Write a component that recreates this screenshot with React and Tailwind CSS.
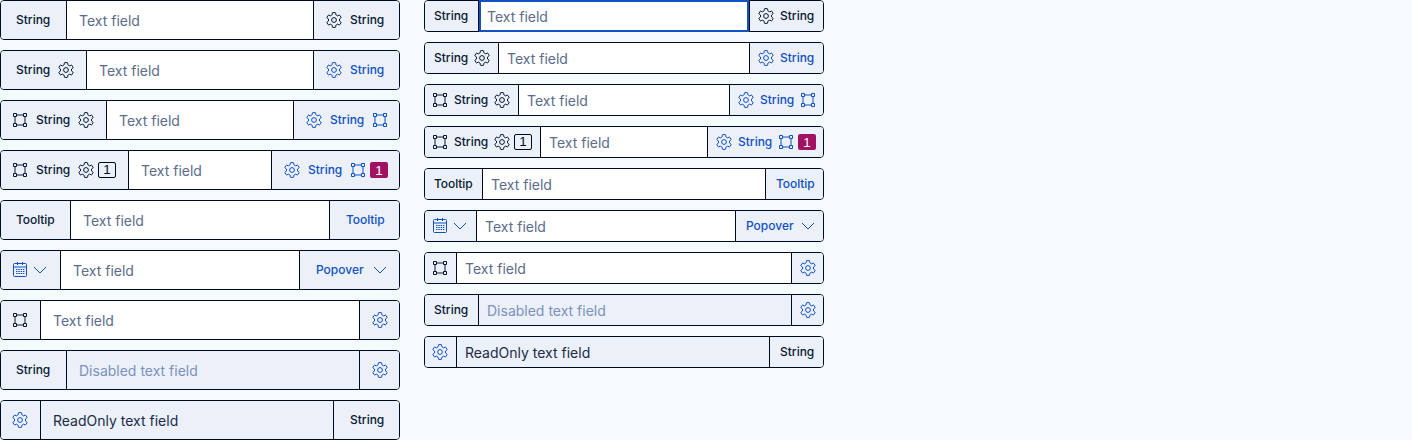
import { createContext, useContext } from "react";
import clsx from "clsx";

const SmallContext = createContext(false);

function Gear() {
  return (
    <svg className="size-4 shrink-0" viewBox="0 0 16 16" fill="none" stroke="currentColor" strokeWidth="1" strokeLinejoin="round">
      <path d="M6.900 .6h2.200q.5 0 .55.500L9.800 2.700L11.700 3.900L13.200 3.200q.5-.2.75.2L15 5.300q.25.450-.15.750L13.500 7V9L14.850 9.950q.4.300.15.750L13.950 12.600q-.250.400-.750.200L11.700 12.100L9.800 13.300L9.650 14.900q-.05.500-.55.500H6.900q-.5 0-.55-.5L6.200 13.300L4.300 12.100L2.800 12.800q-.5.200-.75-.2L1 10.700q-.25-.450.15-.750L2.500 9V7L1.150 6.050q-.4-.3-.15-.75L2.050 3.400q.25-.4.750-.2L4.300 3.900L6.200 2.700L6.350 1.100q.05-.5.550-.5z" />
      <circle cx="8" cy="8" r="2.400" />
    </svg>
  );
}

function Frame() {
  return (
    <svg className="size-4 shrink-0" viewBox="0 0 16 16" fill="none" stroke="currentColor">
      <path d="M1.500 1.500h3v3h-3zM11.500 1.500h3v3h-3zM1.500 11.500h3v3h-3zM11.500 11.500h3v3h-3z" />
      <path d="M5 3h6M5 13h6M3 5v6M13 5v6" />
    </svg>
  );
}

function Calendar() {
  return (
    <svg className="size-4 shrink-0" viewBox="0 0 16 16" fill="none" stroke="currentColor">
      <rect x="1.500" y="1.500" width="13" height="13" rx="1" />
      <path d="M2 5h12M5.500 0v3M10.500 0v3" />
      <path strokeDasharray="1.500 .8" d="M4 7.500h8.400M4 9.500h8.400M4 11.500h8.400" />
    </svg>
  );
}

function Chevron() {
  return (
    <svg className="size-4 shrink-0" viewBox="0 0 16 16" fill="none" stroke="currentColor">
      <path d="M2 5l6 6 6-6" />
    </svg>
  );
}

const labelWidths = {
  String: "w-[34px]",
  Tooltip: "w-[38px] tracking-[-0.08px]",
  Popover: "w-12",
};

function Label({ children }) {
  const small = useContext(SmallContext);
  return (
    <span
      className={clsx(
        "box-content shrink-0 text-xs leading-4 font-medium whitespace-nowrap",
        labelWidths[children],
        small ? "px-0.5" : "px-1",
      )}
    >
      {children}
    </span>
  );
}

function Counter({ filled }) {
  return (
    <span
      className={clsx(
        "flex h-4 w-[18px] shrink-0 items-center justify-center rounded-[2px] font-['Liberation_Sans',sans-serif] text-[13.333px] leading-none",
        filled ? "bg-[#a11262] pt-px text-white" : "border border-[#000a1f] text-[#000a1f]",
      )}
    >
      1
    </span>
  );
}

function Addon({ side, blue, children }) {
  const small = useContext(SmallContext);
  return (
    <div
      className={clsx(
        "flex shrink-0 items-center gap-1 border-[#000a1f] bg-[#ebf0f9]",
        side === "left" ? "rounded-l-[3px] border-r" : "rounded-r-[3px] border-l",
        side === "left" && (small ? "pr-2 pl-[7px]" : "pr-3 pl-[11px]"),
        side === "right" && (small ? "pr-[7px] pl-2" : "pr-[11px] pl-3"),
        blue ? "text-[#1150c3]" : "text-[#0a1833]",
      )}
    >
      {children}
    </div>
  );
}

function Field({ before, after, blueBefore, blueAfter, text = "Text field", state, focused }) {
  const small = useContext(SmallContext);
  return (
    <div className={clsx("flex rounded border border-[#000a1f]", small ? "h-8" : "h-10")}>
      <Addon side="left" blue={blueBefore}>{before}</Addon>
      <div
        className={clsx(
          "flex min-w-0 flex-1 items-center pt-0.5 text-sm leading-5",
          focused ? "-my-px border-2 border-[#1150c3] px-1.5" : small ? "px-2" : "px-3",
          state ? "bg-[#ebf0f9]" : "bg-white",
          !state && "text-[#5c6c8a]",
          state === "disabled" && "text-[#7b92bb]",
          state === "readonly" && "text-[#1c2b47]",
        )}
      >
        {text}
      </div>
      <Addon side="right" blue={blueAfter}>{after}</Addon>
    </div>
  );
}

function FieldList({ small }) {
  return (
    <SmallContext.Provider value={small}>
      <div className="flex w-[400px] flex-col gap-2.5">
        <Field focused={small} before={<Label>String</Label>} after={<><Gear /><Label>String</Label></>} />
        <Field before={<><Label>String</Label><Gear /></>} blueAfter after={<><Gear /><Label>String</Label></>} />
        <Field before={<><Frame /><Label>String</Label><Gear /></>} blueAfter after={<><Gear /><Label>String</Label><Frame /></>} />
        <Field
          before={<><Frame /><Label>String</Label><Gear /><Counter /></>}
          blueAfter
          after={<><Gear /><Label>String</Label><Frame /><Counter filled /></>}
        />
        <Field before={<Label>Tooltip</Label>} blueAfter after={<Label>Tooltip</Label>} />
        <Field blueBefore before={<><Calendar /><Chevron /></>} blueAfter after={<><Label>Popover</Label><Chevron /></>} />
        <Field before={<Frame />} blueAfter after={<Gear />} />
        <Field state="disabled" text="Disabled text field" before={<Label>String</Label>} blueAfter after={<Gear />} />
        <Field state="readonly" text="ReadOnly text field" blueBefore before={<Gear />} after={<Label>String</Label>} />
      </div>
    </SmallContext.Provider>
  );
}

export default function App() {
  return (
    <main className="flex min-h-screen items-start gap-6 bg-[#f5fafd] font-['Inter',sans-serif]">
      <FieldList small={false} />
      <FieldList small />
    </main>
  );
}
